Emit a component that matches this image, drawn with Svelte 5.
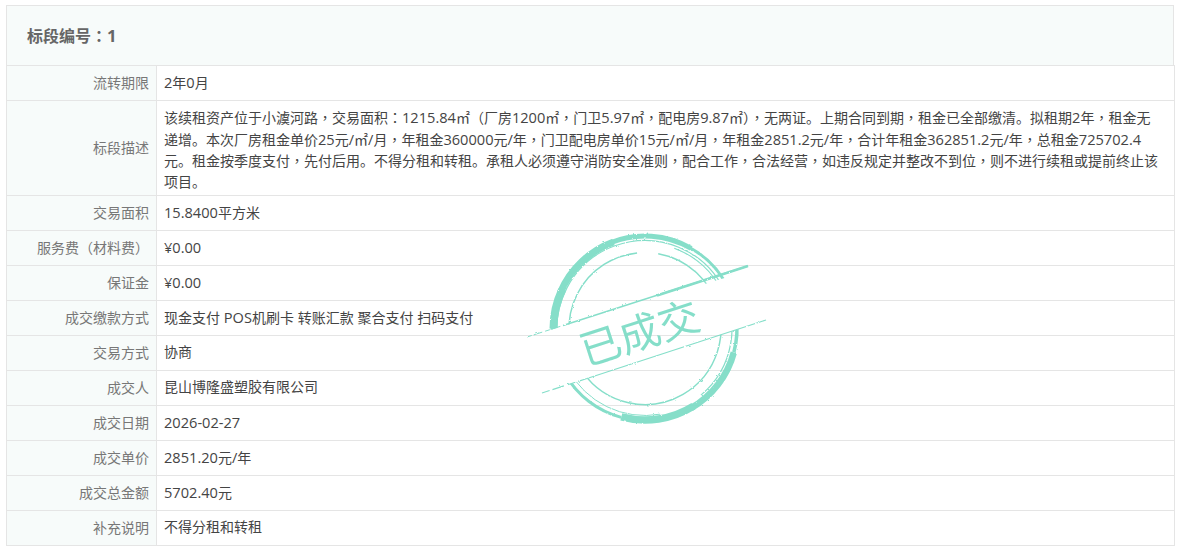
<script>
	const rows = [
		{ label: '流转期限', lines: ['2年0月'] },
		{
			label: '标段描述',
			lines: [
				'该续租资产位于小澞河路，交易面积：1215.84㎡（厂房1200㎡，门卫5.97㎡，配电房9.87㎡），无两证。上期合同到期，租金已全部缴清。拟租期2年，租金无',
				'递增。本次厂房租金单价25元/㎡/月，年租金360000元/年，门卫配电房单价15元/㎡/月，年租金2851.2元/年，合计年租金362851.2元/年，总租金725702.4',
				'元。租金按季度支付，先付后用。不得分租和转租。承租人必须遵守消防安全准则，配合工作，合法经营，如违反规定并整改不到位，则不进行续租或提前终止该',
				'项目。'
			]
		},
		{ label: '交易面积', lines: ['15.8400平方米'] },
		{ label: '服务费（材料费）', lines: ['¥0.00'] },
		{ label: '保证金', lines: ['¥0.00'] },
		{ label: '成交缴款方式', lines: ['现金支付 POS机刷卡 转账汇款 聚合支付 扫码支付'] },
		{ label: '交易方式', lines: ['协商'] },
		{ label: '成交人', lines: ['昆山博隆盛塑胶有限公司'] },
		{ label: '成交日期', lines: ['2026-02-27'] },
		{ label: '成交单价', lines: ['2851.20元/年'] },
		{ label: '成交总金额', lines: ['5702.40元'] },
		{ label: '补充说明', lines: ['不得分租和转租'] }
	];

	// latin runs are a touch larger, and the comma and colon sit centred in their box
	function runs(text) {
		return text
			.split(/([A-Za-z0-9.\-¥/ ]+|[，：])/)
			.filter(Boolean)
			.map((t) => ({
				t,
				cls: /^[，：]$/.test(t) ? 'punct' : /^[A-Za-z0-9.\-¥/ ]+$/.test(t) ? 'latin' : ''
			}));
	}

	// stamp rings: radius, start and end angle (clockwise from 3 o'clock), stroke width
	const cx = 118;
	const cy = 102.5;
	const arcs = [
		{ r: 92, a0: 160, a1: 182, w: 5 },
		{ r: 91.5, a0: 180, a1: 205, w: 8 },
		{ r: 92, a0: 203, a1: 250, w: 7 },
		{ r: 92.5, a0: 248, a1: 300, w: 5 },
		{ r: 92.5, a0: 298, a1: 335, w: 3 },
		{ r: 88, a0: 165, a1: 335, w: 1.2 },
		{ r: 85.5, a0: 290, a1: 335, w: 1.1 },
		{ r: 76, a0: 150, a1: 264, w: 1.5 },
		{ r: 76, a0: 280, a1: 345, w: 1.5 },
		{ r: 92, a0: -30, a1: 15, w: 3.5 },
		{ r: 92, a0: 15, a1: 60, w: 6.5 },
		{ r: 91.5, a0: 58, a1: 105, w: 7.5 },
		{ r: 92, a0: 105, a1: 150, w: 3 },
		{ r: 87, a0: -30, a1: 50, w: 1.2 },
		{ r: 87, a0: 80, a1: 152, w: 1 },
		{ r: 76, a0: -25, a1: 145, w: 1.5 }
	];

	function arcPath(a) {
		const rad = (d) => (d * Math.PI) / 180;
		const x0 = cx + a.r * Math.cos(rad(a.a0));
		const y0 = cy + a.r * Math.sin(rad(a.a0));
		const x1 = cx + a.r * Math.cos(rad(a.a1));
		const y1 = cy + a.r * Math.sin(rad(a.a1));
		const large = a.a1 - a.a0 > 180 ? 1 : 0;
		return `M${x0} ${y0}A${a.r} ${a.r} 0 ${large} 1 ${x1} ${y1}`;
	}
</script>

<div class="page">
	<div class="panel">
		<div class="title">标段编号<span class="punct">：</span><span class="latin">1</span></div>
		{#each rows as row}
			<div class="row" class:tall={row.lines.length > 1}>
				<div class="label">{row.label}</div>
				<div class="value">
					{#each row.lines as line}
						<div class="line">
							{#each runs(line) as run}<span class={run.cls}>{run.t}</span>{/each}
						</div>
					{/each}
				</div>
			</div>
		{/each}
		<svg class="stamp" width="250" height="210" viewBox="0 0 250 210" aria-hidden="true">
			<defs>
				<filter id="rough" x="-10%" y="-10%" width="120%" height="120%">
					<feTurbulence type="fractalNoise" baseFrequency="0.35" numOctaves="2" seed="4" />
					<feDisplacementMap in="SourceGraphic" scale="2.2" />
					<feGaussianBlur stdDeviation="0.3" />
				</filter>
				<clipPath id="offBand">
					<polygon points="0,0 250,0 250,36.500 0,111" />
					<polygon points="0,172 250,90.500 250,210 0,210" />
				</clipPath>
			</defs>
			<g clip-path="url(#offBand)" filter="url(#rough)">
				{#each arcs as a}
					<path d={arcPath(a)} stroke-width={a.w} />
				{/each}
			</g>
			<g filter="url(#rough)">
				<path d="M0 111L36 99.500" stroke-width="1" stroke-dasharray="5 2 9 3" />
				<path d="M36 99.500L221 40" stroke-width="1.500" />
				<path d="M130 69.500L221 40" stroke-width="2.600" />
				<path d="M15 167L60 152.500" stroke-width="1.200" stroke-dasharray="8 3 12 4" />
				<path d="M60 152.500L239 94" stroke-width="1.300" />
			</g>
			<text x="113" y="122" transform="rotate(-18 113 108)">已成交</text>
		</svg>
	</div>
</div>

<style>
	:global(body) {
		margin: 0;
		background: #fff;
	}
	.page {
		padding: 5px 6px 10px;
		font-family: 'Open Sans', 'Noto Sans CJK SC', sans-serif;
		font-size: 14px;
		color: #444;
	}
	.panel {
		position: relative;
		border-bottom: 1px solid #e5e5e5;
	}
	.title {
		height: 59px;
		line-height: 58px;
		margin-right: 1px;
		padding-left: 20px;
		background: #f7fbfa;
		border: 1px solid #e5e5e5;
		border-bottom: 0;
		font-size: 16px;
		font-weight: bold;
		color: #666;
	}
	.latin {
		font-size: 1.043em;
	}
	.punct {
		font-family: 'Noto Sans CJK TC', sans-serif;
	}
	.row {
		display: flex;
		border: 1px solid #e5e5e5;
		border-bottom: 0;
	}
	.label {
		width: 142px;
		flex: none;
		display: flex;
		align-items: center;
		justify-content: flex-end;
		box-sizing: content-box;
		padding: 0 7px 2px 0;
		background: #f7fbfa;
		border-right: 1px solid #e5e5e5;
		color: #777;
	}
	.value {
		flex: 1;
		height: 34px;
		box-sizing: border-box;
		padding: 5px 0 7px 7px;
		line-height: 22px;
	}
	.tall .value {
		height: 94px;
		padding: 6px 0 6px 7px;
		line-height: 20.5px;
	}
	.line {
		white-space: nowrap;
	}
	.stamp {
		position: absolute;
		left: 521px;
		top: 221px;
		overflow: visible;
		pointer-events: none;
		opacity: 0.92;
	}
	.stamp path {
		fill: none;
		stroke: #7bdcc5;
	}
	.stamp text {
		fill: #7bdcc5;
		font-family: 'Noto Sans CJK SC', sans-serif;
		font-size: 41px;
		text-anchor: middle;
	}
</style>
